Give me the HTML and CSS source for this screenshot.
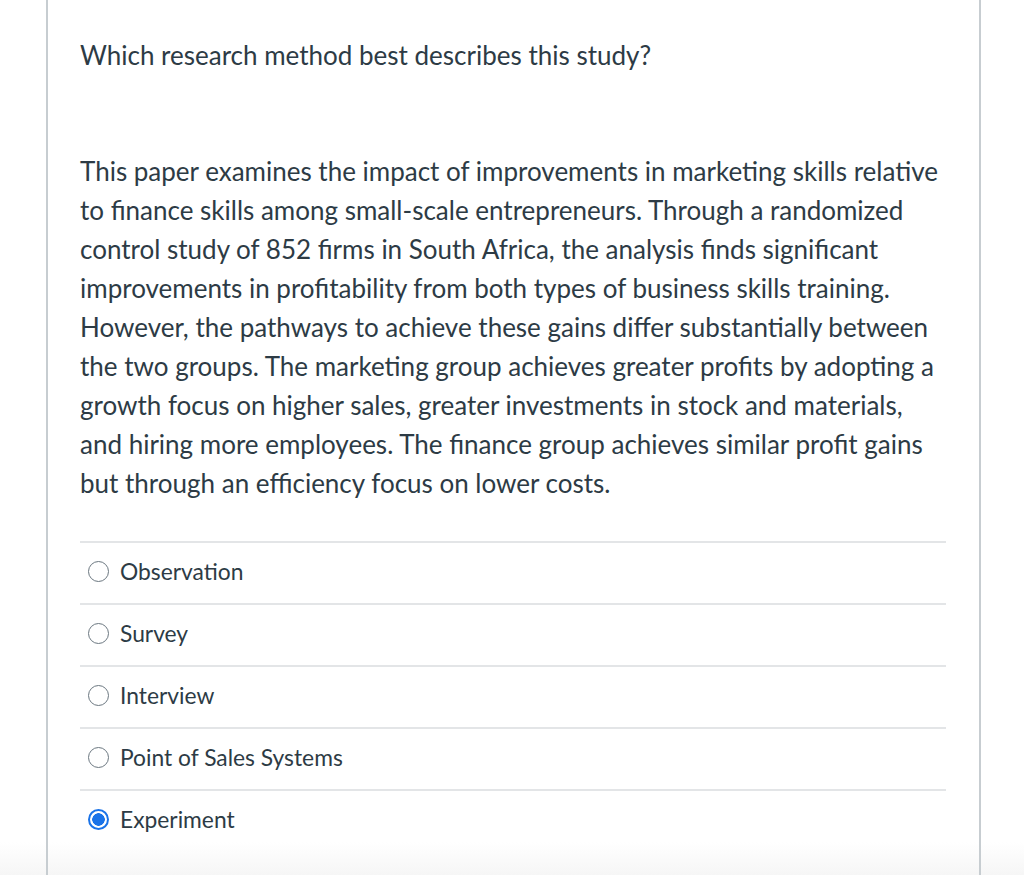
FILE: index.html
```html
<!DOCTYPE html>
<html>
<head>
<meta charset="utf-8">
<link rel="stylesheet" href="styles.css">
</head>
<body>
<div class="card">
  <p class="question">Which research method best describes this study?</p>
  <p class="passage">This paper examines the impact of improvements in marketing skills relative to finance skills among small-scale entrepreneurs. Through a randomized control study of 852 firms in South Africa, the analysis finds significant improvements in profitability from both types of business skills training. However, the pathways to achieve these gains differ substantially between the two groups. The marketing group achieves greater profits by adopting a growth focus on higher sales, greater investments in stock and materials, and hiring more employees. The finance group achieves similar profit gains but through an efficiency focus on lower costs.</p>
  <ul class="answers">
    <li class="answer"><span class="radio"></span><span class="label">Observation</span></li>
    <li class="answer"><span class="radio"></span><span class="label">Survey</span></li>
    <li class="answer"><span class="radio"></span><span class="label">Interview</span></li>
    <li class="answer"><span class="radio"></span><span class="label">Point of Sales Systems</span></li>
    <li class="answer"><span class="radio checked"></span><span class="label">Experiment</span></li>
  </ul>
</div>
</body>
</html>
```
FILE: styles.css
```css
html, body {
  margin: 0;
  padding: 0;
}
body {
  font-family: Lato, "Open Sans", sans-serif;
  color: #2d3b45;
  overflow: hidden;
  height: 875px;
  background: linear-gradient(to bottom, #fff 0, #fff 842px, #f6f6f6 875px);
}
.card {
  margin-left: 46px;
  border-left: 2px solid #c7cdd1;
  border-right: 2px solid #c7cdd1;
  padding: 40px 33px 0 32px;
  box-sizing: content-box;
  width: 866px;
  height: 835px;
}
.question {
  margin: 0;
  font-size: 26px;
  line-height: 30px;
}
.passage {
  margin: 82px 0 0;
  font-size: 26px;
  line-height: 39px;
}
.answers {
  list-style: none;
  margin: 38px 0 0;
  padding: 0;
}
.answer {
  display: flex;
  align-items: center;
  border-top: 2px solid #e3e5e7;
  padding: 14px 0 18px 8px;
  height: 28px;
}
.radio {
  border: 1.5px solid #6b7780;
  border-radius: 50%;
  box-sizing: border-box;
  width: 21px;
  height: 21px;
  margin-right: 11px;
  flex: none;
  background: #fff;
}
.radio.checked {
  border: 2px solid #1a73e8;
  background: radial-gradient(circle, #1a73e8 0 6px, #fff 6.5px);
}
.label {
  font-size: 22.8px;
  line-height: 28px;
}
```
